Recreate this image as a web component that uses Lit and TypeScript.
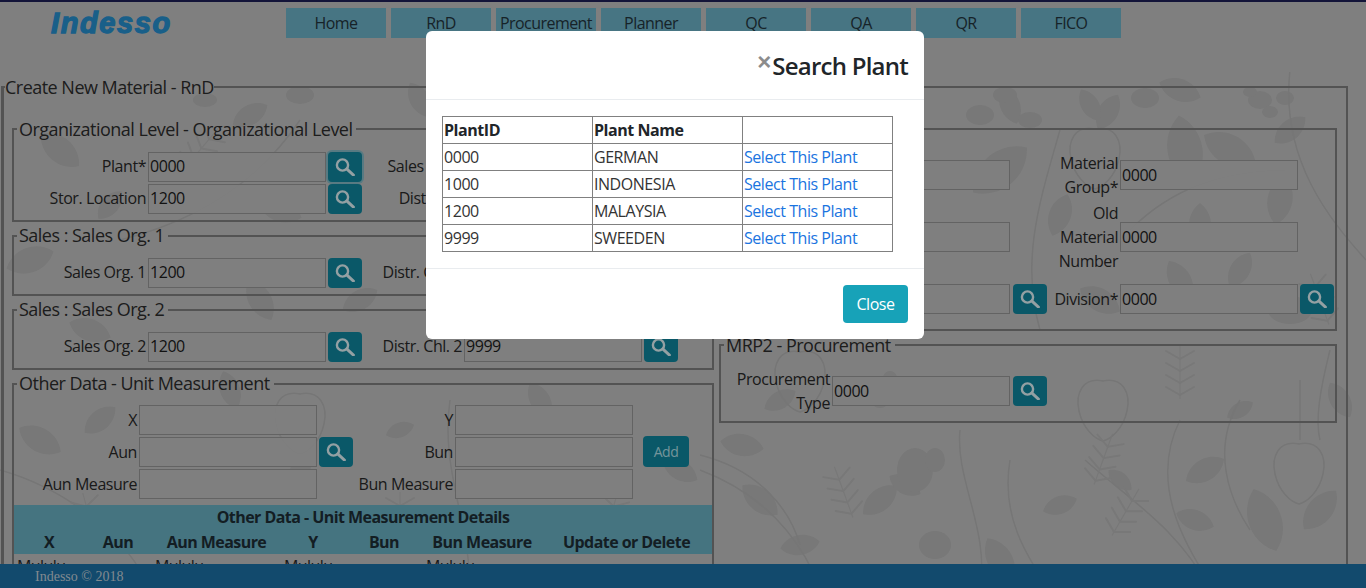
import { LitElement, html, css, svg } from "lit";
import { customElement } from "lit/decorators.js";

const leaves: [number, number, number, number][] = [
  [60,150,40,50],[250,115,-30,40],[280,210,20,46],[110,205,-50,36],[420,100,60,40],[600,110,-20,44],[1010,105,70,40],[1180,90,20,44],[1108,112,-60,40],[1090,105,60,36],
  [1185,150,80,70],[1000,170,-40,70],[1230,150,30,60],[1280,200,100,50],[1060,215,-70,44],[1200,225,90,44],[1180,280,60,44],[1240,270,120,40],[1100,300,30,46],
  [30,260,-20,50],[260,300,60,46],[90,330,20,44],[360,300,-30,40],[640,300,40,44],[1290,130,-40,40],
  [40,440,30,48],[100,420,-40,40],[230,390,70,40],[300,470,120,38],[400,430,-20,30],[540,400,60,40],[680,470,30,40],
  [742,445,10,44],[780,400,-30,36],[880,500,-40,44],[905,485,30,36],[760,500,40,46],[800,545,-10,40],[1205,470,-30,44],[1195,520,20,40],[1265,520,70,66],[1320,510,-50,50],[1340,400,60,40],[1060,505,-20,36],[1120,480,40,30],[1240,410,-30,30],[1000,560,60,50],
];
const berries: [number, number][] = [[1299,470],[1103,407],[300,420],[1095,155],[800,378]];
const curves = [
  "M700 470C780 500 810 560 820 590","M960 430C955 480 990 530 980 590","M1010 460C1000 520 1030 560 1050 590","M1180 420C1150 480 1180 540 1215 590","M1085 460C1130 500 1180 530 1210 590",
  "M700 455C760 470 790 510 800 545","M1060 130C1040 200 1020 260 1040 330","M0 470C70 490 130 540 150 590","M300 120C260 180 200 220 120 240","M1130 230C1170 190 1220 170 1290 170","M1290 70C1280 160 1330 220 1366 260","M450 400C440 470 470 520 470 590",
  "M1240 400C1210 450 1230 500 1250 530","M1300 380L1300 440","M1330 350C1320 390 1315 420 1320 440",
];
const ovals: [number, number, number, number][] = [[1260,100,12,9],[1270,112,8,6],[1250,92,7,5],[1285,98,9,7],[980,115,14,10],[1030,120,12,8],[935,545,16,14],[915,470,18,22],[935,460,10,12],[890,378,7,7],[880,400,9,8],[1290,310,22,14],[1005,95,12,8],[1145,98,14,10],[800,120,12,9],[205,100,12,7],[300,95,14,9]];
const sprigs: [number, number, number][] = [[1180,373,0],[1103,460,20],[844,493,-20],[1125,513,30],[90,520,-15],[610,520,15],[400,520,0],[200,150,40],[1320,300,-20],[540,300,20]];

const sprig = ([x, y, r]: [number, number, number]) => svg`<g transform="translate(${x} ${y}) rotate(${r})">
  <path d="M0 26L0 -28" fill="none" stroke="#acacac" stroke-width="1.2"></path>
  ${[-22, -10, 2, 14].map((o) => svg`<path d="M0 ${o + 8}L-14 ${o}M0 ${o + 8}L14 ${o}" fill="none" stroke="#acacac" stroke-width="2" stroke-linecap="round"></path>`)}
</g>`;

const bgDecor = svg`
  <g fill="#acacac">
    ${leaves.map(([x, y, r, l]) => svg`<path transform="translate(${x} ${y}) rotate(${r})" d="M${-l / 2} 0C${-l / 4} ${-l / 3} ${l / 4} ${-l / 3} ${l / 2} 0C${l / 4} ${l / 3} ${-l / 4} ${l / 3} ${-l / 2} 0Z"></path>`)}
    ${ovals.map(([x, y, a, b]) => svg`<ellipse cx=${x} cy=${y} rx=${a} ry=${b}></ellipse>`)}
  </g>
  <g fill="none" stroke="#a9a9a9" stroke-width="1.5">
    ${curves.map((d) => svg`<path d=${d}></path>`)}
    ${berries.map(([x, y]) => svg`<path transform="translate(${x} ${y})" d="M0 -26C20 -30 28 -14 24 4C20 22 8 32 0 34C-8 32 -20 22 -24 4C-28 -14 -20 -30 0 -26Z"></path>`)}
  </g>
  ${sprigs.map(sprig)}
`;

const searchIcon = html`<svg class="mag" viewBox="0 0 20 18" width="20" height="18" aria-hidden="true"><circle cx="7.5" cy="7" r="5.6" fill="none" stroke="currentColor" stroke-width="2.4"></circle><path d="M12 11.2L18.4 17" fill="none" stroke="currentColor" stroke-width="3" stroke-linecap="round"></path></svg>`;

const plants = [["0000", "GERMAN"], ["1000", "INDONESIA"], ["1200", "MALAYSIA"], ["9999", "SWEEDEN"]];
const navItems = ["Home", "RnD", "Procurement", "Planner", "QC", "QA", "QR", "FICO"];

@customElement("app-root")
export class AppRoot extends LitElement {
  static styles = css`
    :host { display: flex; flex-direction: column; height: 100vh; overflow: hidden; position: relative; background: #b7b7b7; color: #262626; font: 16px/24px "Open Sans", "Liberation Sans", sans-serif; letter-spacing: -0.45px; }
    * { box-sizing: border-box; }
    .decor { position: absolute; left: 0; top: 72px; width: 1366px; height: 516px; }
    .top { position: relative; height: 75px; flex: none; border-top: 2px solid #1c1e52; display: flex; align-items: flex-start; padding-top: 6px; }
    .logo { width: 286px; padding-left: 51px; font: italic 700 29px/30px "Liberation Sans", sans-serif; color: #2488c4; letter-spacing: 1.6px; -webkit-text-stroke: 1.3px #2488c4; }
    nav { display: flex; gap: 5px; }
    nav a { width: 100px; height: 30px; background: #66a8bc; text-align: center; line-height: 30px; color: #22323a; letter-spacing: -0.55px; }
    main { position: relative; flex: 1; min-height: 0; padding: 0 0 0 1px; overflow: hidden; }
    fieldset { margin: 0; padding: 0; min-width: 0; border: 2px solid #787878; }
    legend { padding: 0; font-size: 18px; line-height: 24px; letter-spacing: -0.52px; color: #2a2a2a; }
    .outer { width: 1347px; height: 620px; padding: 18px 9px 0; border-width: 2px 2px 0 3px; }
    .outer > legend { margin-left: -8px; }
    .cols { display: grid; grid-template-columns: 702px 618px; column-gap: 5px; margin-left: -1px; align-items: start; }
    .stack { display: flex; flex-direction: column; }
    .sub { padding: 10px 0 6px; margin-bottom: 2px; }
    .sub.org { padding-top: 11px; }
    .sub legend { margin-left: 3px; padding: 0 4px 0 2px; }
    .sub legend.lift { line-height: 22px; padding-bottom: 2px; }
    .grid { display: grid; row-gap: 2px; align-items: center; }
    .g-left { grid-template-columns: 134px 178px 36px 102px 178px 36px; }
    .g-other { grid-template-columns: 125px 178px 36px 102px 178px 10px 46px; }
    .g-right { grid-template-columns: 111px 178px 38px 72px 178px 36px; }
    label { text-align: right; padding-right: 2px; }
    .g-left label { transform: translateY(-1px); }
    .in { height: 30px; border: 1px solid #8f8f8f; background: rgba(183,183,183,.85); padding: 0 1px; line-height: 27px; white-space: nowrap; overflow: hidden; color: #1a1a1a; }
    .g-right .in { line-height: 29px; }
    button { font: inherit; letter-spacing: inherit; border: 0; }
    .s { width: 34px; height: 30px; border-radius: 4px; background: #0f7f95; color: #d5e6ea; padding: 0; display: flex; align-items: center; justify-content: center; margin-left: 2px; }
    .g-right .s.first { margin-left: 3px; }
    .s.focus { box-shadow: 0 0 0 2px rgba(80,170,190,.55); }
    .add { grid-column: 7; width: 46px; height: 31px; margin-top: -1px; border-radius: 4px; background: #0f7f95; color: #a8d5de; font-size: 14px; padding: 0; }
    .details { width: 698px; margin: 6px 0 0; border-collapse: collapse; table-layout: fixed; font-weight: 700; color: #1c2b33; letter-spacing: -0.55px; }
    .details thead { background: #64a6b8; }
    .details th { padding: 0; height: 24.5px; font-weight: 700; line-height: 24px; }
    .details td { padding: 0 3px; font-weight: 400; white-space: nowrap; line-height: 24px; color: #262626; }
    .other { padding: 9px 0 0; margin: 0; height: 400px; border-bottom-width: 0; }
    footer { position: relative; flex: none; height: 24px; background: #1b6b9d; color: #b9c4cd; padding-left: 35px; font: 14px/26px "Liberation Serif", serif; letter-spacing: 0; }
    .backdrop { position: fixed; inset: 0; background: rgba(0,0,0,.3); }
    .modal { position: fixed; left: 426px; top: 31px; width: 498px; height: 308px; background: #fff; border-radius: 6px; color: #212529; display: flex; flex-direction: column; }
    .mh { height: 69px; flex: none; border-bottom: 1px solid #e9ecef; display: flex; justify-content: flex-end; padding: 17px 16px 0; }
    .x { font: 700 24px/24px "Liberation Sans", sans-serif; color: #8c8c8c; padding: 0; margin: 2px 1px 0 0; height: 24px; background: none; letter-spacing: 0; }
    h5 { margin: 0; font-size: 24px; line-height: 36px; font-weight: 600; letter-spacing: -0.75px; }
    .mb { height: 169px; flex: none; padding: 16px; border-bottom: 1px solid #e9ecef; }
    .plants { border-collapse: collapse; table-layout: fixed; width: 451px; }
    .plants th, .plants td { border: 1px solid #808080; padding: 1px; height: 27px; text-align: left; font-weight: 400; line-height: 24px; color: #333; }
    .plants th { font-weight: 700; color: #212529; }
    .plants a { color: #1a74e0; }
    .mf { flex: 1; display: flex; justify-content: flex-end; align-items: flex-start; padding: 16px; }
    .close { width: 65px; height: 38px; border-radius: 4px; background: #17a2b8; color: #fff; }
  `;

  private field(label: unknown, value: string, search: boolean, extra = "") {
    return html`<label>${label}</label><div class="in">${value}</div>${search ? html`<button class="s ${extra}">${searchIcon}</button>` : html`<span></span>`}`;
  }

  render() {
    return html`
      <svg class="decor" viewBox="0 72 1366 516" aria-hidden="true">${bgDecor}</svg>
      <div class="top">
        <div class="logo">Indesso</div>
        <nav>${navItems.map((n) => html`<a>${n}</a>`)}</nav>
      </div>
      <main>
        <fieldset class="outer">
          <legend>Create New Material - RnD</legend>
          <div class="cols">
            <div class="stack">
              <fieldset class="sub org">
                <legend>Organizational Level - Organizational Level</legend>
                <div class="grid g-left">
                  ${this.field("Plant*", "0000", true, "focus")}${this.field("Sales Org*", "1200", true)}
                  ${this.field("Stor. Location", "1200", true)}${this.field("Distr. Chl", "9999", true)}
                </div>
              </fieldset>
              <fieldset class="sub">
                <legend class="lift">Sales : Sales Org. 1</legend>
                <div class="grid g-left">${this.field("Sales Org. 1", "1200", true)}${this.field("Distr. Chl. 1", "9999", true)}</div>
              </fieldset>
              <fieldset class="sub">
                <legend class="lift">Sales : Sales Org. 2</legend>
                <div class="grid g-left">${this.field("Sales Org. 2", "1200", true)}${this.field("Distr. Chl. 2", "9999", true)}</div>
              </fieldset>
              <fieldset class="sub other">
                <legend class="lift">Other Data - Unit Measurement</legend>
                <div class="grid g-other">
                  ${this.field("X", "", false)}${this.field("Y", "", false)}<span></span>
                  ${this.field("Aun", "", true)}${this.field("Bun", "", false)}<button class="add">Add</button>
                  ${this.field("Aun Measure", "", false)}${this.field("Bun Measure", "", false)}<span></span>
                </div>
                <table class="details">
                  <colgroup><col style="width:70px"><col style="width:68px"><col style="width:129px"><col style="width:64px"><col style="width:78px"><col style="width:118px"><col></colgroup>
                  <thead>
                    <tr><th colspan="7">Other Data - Unit Measurement Details</th></tr>
                    <tr><th>X</th><th>Aun</th><th>Aun Measure</th><th>Y</th><th>Bun</th><th>Bun Measure</th><th>Update or Delete</th></tr>
                  </thead>
                  <tbody><tr><td>Mululu</td><td></td><td>Mululu</td><td>Mululu</td><td></td><td>Mululu</td><td></td></tr></tbody>
                </table>
              </fieldset>
            </div>
            <div class="stack">
              <fieldset class="sub">
                <legend>Basic Data - Basic Data</legend>
                <div class="grid g-right">
                  <label>Material<br>Number</label><div class="in"></div><span></span><label>Material<br>Group*</label><div class="in">0000</div><span></span>
                  <label>Material<br>Description</label><div class="in"></div><span></span><label>Old<br>Material<br>Number</label><div class="in">0000</div><span></span>
                  <label>Material<br>Type*</label><div class="in"></div><button class="s first">${searchIcon}</button><label>Division*</label><div class="in">0000</div><button class="s">${searchIcon}</button>
                </div>
              </fieldset>
              <fieldset class="sub">
                <legend>MRP2 - Procurement</legend>
                <div class="grid g-right">
                  <label>Procurement<br>Type</label><div class="in">0000</div><button class="s first">${searchIcon}</button>
                </div>
              </fieldset>
            </div>
          </div>
        </fieldset>
      </main>
      <footer>Indesso © 2018</footer>
      <div class="backdrop"></div>
      <div class="modal">
        <div class="mh"><button class="x">×</button><h5>Search Plant</h5></div>
        <div class="mb">
          <table class="plants">
            <colgroup><col style="width:150px"><col style="width:150px"><col style="width:150px"></colgroup>
            <tr><th>PlantID</th><th>Plant Name</th><th></th></tr>
            ${plants.map(([id, n]) => html`<tr><td>${id}</td><td>${n}</td><td><a>Select This Plant</a></td></tr>`)}
          </table>
        </div>
        <div class="mf"><button class="close">Close</button></div>
      </div>
    `;
  }
}
